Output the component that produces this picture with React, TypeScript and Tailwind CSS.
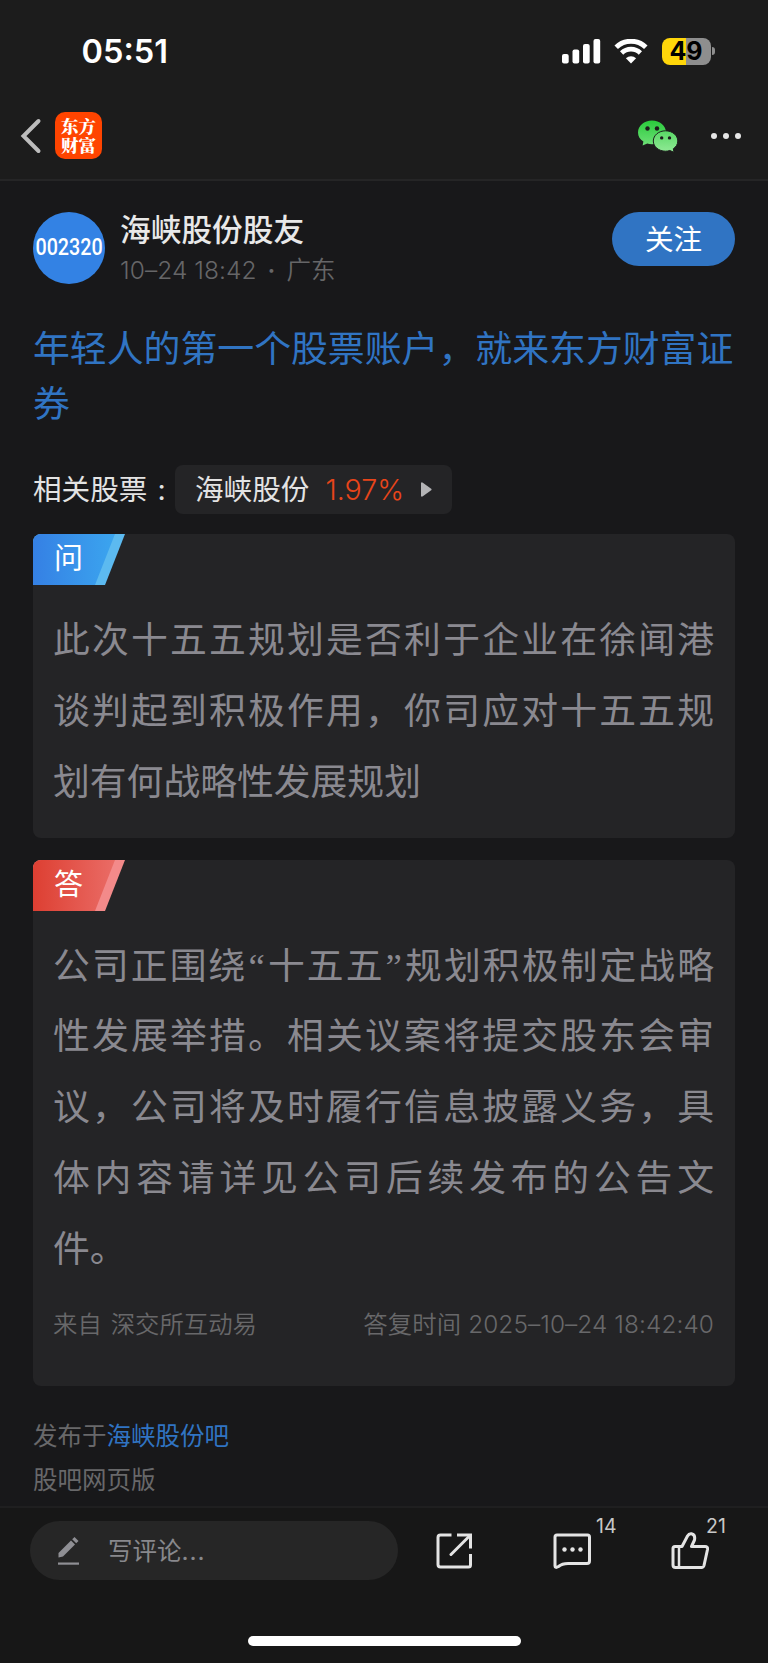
import React from 'react';

interface QaCardProps {
  label: string;
  lines: string[];
  variant: 'question' | 'answer';
  children?: React.ReactNode;
}

const QUESTION_LINES = [
  '此次十五五规划是否利于企业在徐闻港',
  '谈判起到积极作用，你司应对十五五规',
  '划有何战略性发展规划',
];

const ANSWER_LINES = [
  '公司正围绕“十五五”规划积极制定战略',
  '性发展举措。相关议案将提交股东会审',
  '议，公司将及时履行信息披露义务，具',
  '体内容请详见公司后续发布的公告文',
  '件。',
];

const SignalIcon = () => (
  <svg width="39" height="25" viewBox="0 0 39 25" fill="#fff">
    <rect x="0" y="15" width="6.7" height="9.5" rx="2" />
    <rect x="10.5" y="10.5" width="6.7" height="14" rx="2" />
    <rect x="21" y="5" width="6.7" height="19.5" rx="2" />
    <rect x="31.5" y="0" width="6.7" height="24.5" rx="2" />
  </svg>
);

const WifiIcon = () => (
  <svg width="34" height="25" viewBox="0 0 34 25" fill="none" stroke="#fff">
    <path d="M2.2 8.2 A21.4 21.4 0 0 1 31.8 8.2" strokeWidth="5" />
    <path d="M7.6 14 A13.4 13.4 0 0 1 26.4 14" strokeWidth="4.6" />
    <path d="M17 24.4 L11.9 19.2 A7.4 7.4 0 0 1 22.1 19.2 Z" fill="#fff" stroke="none" />
  </svg>
);

const Battery = () => (
  <div className="flex items-center">
    <div className="flex h-[27px] w-[49px] items-center justify-center rounded-[8px] bg-linear-to-r from-[#ffd60a] from-50% to-[#8e8e8e] to-50%">
      <span className="text-[25px] leading-none font-bold text-black">49</span>
    </div>
    <div className="ml-[1.5px] h-2 w-[3px] rounded-r-full bg-[#8e8e8e]" />
  </div>
);

const StatusBar = () => (
  <div className="flex h-[102px] items-center justify-between pr-[53px] pl-[81.5px]">
    <span className="pt-[3px] text-[32.5px] leading-none font-semibold text-white">05:51</span>
    <div className="flex items-center">
      <SignalIcon />
      <div className="mr-[14px] ml-[13px]">
        <WifiIcon />
      </div>
      <Battery />
    </div>
  </div>
);

const WechatIcon = () => (
  <svg width="40" height="33" viewBox="0 0 40 33">
    <defs>
      <linearGradient id="wechat" x1="0" y1="0" x2="0" y2="1">
        <stop offset="0" stopColor="#2acb3c" />
        <stop offset="1" stopColor="#6ee077" />
      </linearGradient>
      <linearGradient id="wechatSmall" x1="0" y1="0" x2="0" y2="1">
        <stop offset="0" stopColor="#58d865" />
        <stop offset="1" stopColor="#92ea97" />
      </linearGradient>
    </defs>
    <path
      d="M14 .5 C6.2 .5 0 5.7 0 12.4 C0 16.2 2 19.4 5.4 21.6 L4.6 25.4 L9.2 23.4 C10.7 23.9 12.3 24.2 14 24.2 C21.8 24.2 28 19 28 12.4 C28 5.7 21.8 .5 14 .5 Z"
      fill="url(#wechat)"
    />
    <circle cx="9.5" cy="8.5" r="2.2" fill="#1c1c1c" />
    <circle cx="19" cy="8.5" r="2.2" fill="#1c1c1c" />
    <path
      d="M27.5 10.8 C34.3 10.8 39.8 15.3 39.8 21 C39.8 24.2 38 27 35.3 28.8 L36 32.3 L31.8 30.5 C30.4 31 29 31.2 27.5 31.2 C20.8 31.2 15.3 26.7 15.3 21 C15.3 15.3 20.8 10.8 27.5 10.8 Z"
      fill="url(#wechatSmall)"
      stroke="#1c1c1c"
      strokeWidth="1"
    />
    <circle cx="23.7" cy="17.9" r="1.7" fill="#1c1c1c" />
    <circle cx="31.5" cy="17.9" r="1.7" fill="#1c1c1c" />
  </svg>
);

const NavBar = () => (
  <div className="flex h-[79px] items-center justify-between border-b-2 border-[#252526] pr-[27px] pb-[9px] pl-5">
    <div className="flex items-center">
      <svg width="22" height="36" viewBox="0 0 22 36" fill="none" stroke="#bdbdbd" strokeWidth="4" strokeLinecap="round">
        <path d="M18.5 3 L3.5 18 L18.5 33" strokeLinejoin="miter" />
      </svg>
      <div className="mb-[2px] ml-[13px] flex size-[47px] items-center justify-center rounded-[10px] bg-[#ff4400]">
        <span className="font-['Noto_Serif_CJK_SC','Noto_Sans_CJK_SC',sans-serif] text-[17.5px] leading-[19px] font-black text-white">
          东方
          <br />
          财富
        </span>
      </div>
    </div>
    <div className="flex items-center">
      <WechatIcon />
      <div className="ml-[33px] flex gap-[5.5px]">
        <span className="size-[6.5px] rounded-full bg-[#e6e6e6]" />
        <span className="size-[6.5px] rounded-full bg-[#e6e6e6]" />
        <span className="size-[6.5px] rounded-full bg-[#e6e6e6]" />
      </div>
    </div>
  </div>
);

const AuthorRow = () => (
  <div className="flex items-start">
    <div className="flex size-[72px] items-center justify-center rounded-full bg-[#3382e4]">
      <span className="scale-x-[0.84] font-['Roboto',sans-serif] text-[23.5px] leading-none font-medium text-white">002320</span>
    </div>
    <div className="ml-[15px] flex-1">
      <div className="text-[30.7px] leading-[35px] font-medium text-[#e8e8e8]">海峡股份股友</div>
      <div className="mt-[6px] flex text-[24.5px] leading-[34px] font-[350] text-[#666668]">
        <span className="tracking-[0.05px]">10–24 18:42</span>
        <span className="w-[30px] text-center font-semibold">·</span>
        <span>广东</span>
      </div>
    </div>
    <button className="h-[53.5px] w-[123px] rounded-full bg-[#3074c3] pt-px text-[28.6px] leading-[54px] text-white">关注</button>
  </div>
);

const RelatedStock = () => (
  <div className="mt-[33.5px] flex h-[49px] items-center text-[28.6px] leading-[49px] text-[#e3e3e3]">
    <span className="w-[142px] whitespace-nowrap">
      相关股票<span className="ml-[10px]">:</span>
    </span>
    <div className="flex h-[49px] w-[277px] items-center rounded-lg bg-[#242426] pl-[20px]">
      <span>海峡股份</span>
      <span className="ml-[16px] font-[350] text-[#e8451a]">1.97%</span>
      <svg className="ml-[17px]" width="11" height="15" viewBox="0 0 11 15" fill="#b4b4b6">
        <path d="M0 .5 L1.5 .5 L10.5 7 V8 L1.5 14.5 H0 Z" />
      </svg>
    </div>
  </div>
);

// curly quotes come from the serif face, the rest of the line stays as is
const renderLine = (line: string) =>
  line.split(/([“”])/).map((part, i) =>
    part === '“' || part === '”' ? (
      <span key={i} className="px-[1px] font-['Liberation_Serif',serif] leading-none">
        {part}
      </span>
    ) : (
      part
    )
  );

const QaCard: React.FC<QaCardProps> = ({ label, lines, variant, children }) => {
  const isQuestion = variant === 'question';

  return (
    <div className="overflow-hidden rounded-lg bg-[#242426]">
      <div className="relative h-[51px] w-[92px]">
        <svg className="absolute inset-0" width="92" height="51" viewBox="0 0 92 51">
          <defs>
            <linearGradient id={variant} x1="0" y1="0" x2="1" y2="0">
              <stop offset="0" stopColor={isQuestion ? '#3580e4' : '#dd3f32'} />
              <stop offset="1" stopColor={isQuestion ? '#3ba5ef' : '#ea6c66'} />
            </linearGradient>
          </defs>
          <path d="M0 0 H92 L72 51 H0 Z" fill={isQuestion ? '#5cbaf0' : '#f38a8a'} />
          <path d="M0 0 H82 L62 51 H0 Z" fill={`url(#${variant})`} />
        </svg>
        <span className="relative block pl-[21px] text-[29px] leading-[50px] text-white">{label}</span>
      </div>
      <div className="pt-5 pr-[21px] pl-5 text-[36.8px] leading-[70.8px] text-[#8a8990]">
        {lines.map((line, i) => (
          <p
            key={line}
            className={i < lines.length - 1 ? 'text-justify whitespace-nowrap [text-align-last:justify]' : ''}
          >
            {renderLine(line)}
          </p>
        ))}
      </div>
      {children}
    </div>
  );
};

const BottomBar = () => (
  <div className="flex-1 border-t-2 border-[#1f1f20] bg-[#171717]">
    <div className="mt-[13px] flex h-[59px] items-center pl-[30px]">
      <div className="flex h-[59px] w-[368px] items-center rounded-full bg-[#262626] pl-7">
        <svg width="22" height="30" viewBox="0 0 22 30" fill="#8f8f94">
          <path d="M.5 21.5 V17 L13 4.5 L17 8.5 L5 20.5 Z" />
          <path d="M14.2 3.3 L16.5 1 L20.5 5 L18.2 7.3 Z" />
          <rect x="0" y="26.5" width="21" height="2.2" />
        </svg>
        <span className="ml-[28px] text-[24.5px] leading-[58px] text-[#88888c]">
          写评论<span className="tracking-[1px]">...</span>
        </span>
      </div>
      <svg className="ml-[38px]" width="36" height="36" viewBox="0 0 36 36" fill="none" stroke="#e4e4e4" strokeWidth="3">
        <path d="M15.5 2 H4.5 Q2 2 2 4.5 V31.5 Q2 34 4.5 34 H32.5 Q34.5 34 34.5 32 V21" />
        <path d="M21 2 H34.5 V15.5" />
        <path d="M34 2.5 L15 21.5" strokeLinecap="round" />
      </svg>
      <div className="relative ml-[81px]">
        <svg width="38" height="38" viewBox="0 0 38 38" fill="none" stroke="#e4e4e4" strokeWidth="3" strokeLinejoin="round">
          <path d="M2 5 Q2 3 4 3 H34.5 Q36.5 3 36.5 5 V29 Q36.5 31.5 34 31.5 H15 Q9 31.5 5.5 34.5 Q2 36.5 2 34 Z" />
          <g fill="#e4e4e4" stroke="none">
            <circle cx="11.5" cy="17.5" r="2.2" />
            <circle cx="19.5" cy="17.5" r="2.2" />
            <circle cx="27.5" cy="17.5" r="2.2" />
          </g>
        </svg>
        <span className="absolute -top-[18px] left-[43px] text-[19.5px] leading-6 text-[#c8c8c8]">14</span>
      </div>
      <div className="relative ml-[80px]">
        <svg width="38" height="38" viewBox="0 0 38 38" fill="none" stroke="#e4e4e4" strokeWidth="3" strokeLinejoin="round">
          <path d="M2 16.5 Q2 14.5 4 14.5 H11 L16.5 4 Q18 1.3 20.5 1.7 Q24.5 2.5 23.5 8 L20.5 14.5 H34 Q37 14.5 36.5 17.5 L33 33.5 Q32.5 35.5 30.5 35.5 H4.5 Q2 35.5 2 33 Z" />
          <path d="M8 14.5 V35.5" strokeWidth="2.5" />
        </svg>
        <span className="absolute -top-[18px] left-[35px] text-[19.5px] leading-6 text-[#c8c8c8]">21</span>
      </div>
    </div>
    <div className="mx-auto mt-14 h-[10px] w-[273px] rounded-full bg-white" />
  </div>
);

const App: React.FC = () => {
  return (
    <div className="flex h-[1663px] w-[768px] flex-col overflow-hidden bg-[#18181a] font-['Inter','Noto_Sans_CJK_SC',sans-serif]">
      <header className="bg-[#1c1c1c]">
        <StatusBar />
        <NavBar />
      </header>

      <main className="h-[1325px] px-[33px] pt-[31px]">
        <AuthorRow />
        <h1 className="mt-[35px] text-[36.86px] leading-[54.5px] whitespace-nowrap text-[#3074c3]">
          年轻人的第一个股票账户，就来东方财富证
          <br />券
        </h1>
        <RelatedStock />

        <div className="mt-[20.5px] h-[304px]">
          <QaCard label="问" lines={QUESTION_LINES} variant="question">
            <div className="h-[20.5px]" />
          </QaCard>
        </div>
        <div className="mt-[21.5px]">
          <QaCard label="答" lines={ANSWER_LINES} variant="answer">
            <div className="flex h-[102px] justify-between pt-[22px] pr-[21px] pl-5 text-[24.4px] leading-[36px] font-[350] text-[#68686a]">
              <span className="[word-spacing:2px]">来自 深交所互动易</span>
              <span className="tracking-[0.08px]">答复时间 2025–10–24 18:42:40</span>
            </div>
          </QaCard>
        </div>

        <div className="mt-[28px] text-[24.5px] leading-[44px] text-[#68686a]">
          <div>
            发布于<span className="text-[#3074c3]">海峡股份吧</span>
          </div>
          <div>股吧网页版</div>
        </div>
      </main>

      <BottomBar />
    </div>
  );
};

export default App;
